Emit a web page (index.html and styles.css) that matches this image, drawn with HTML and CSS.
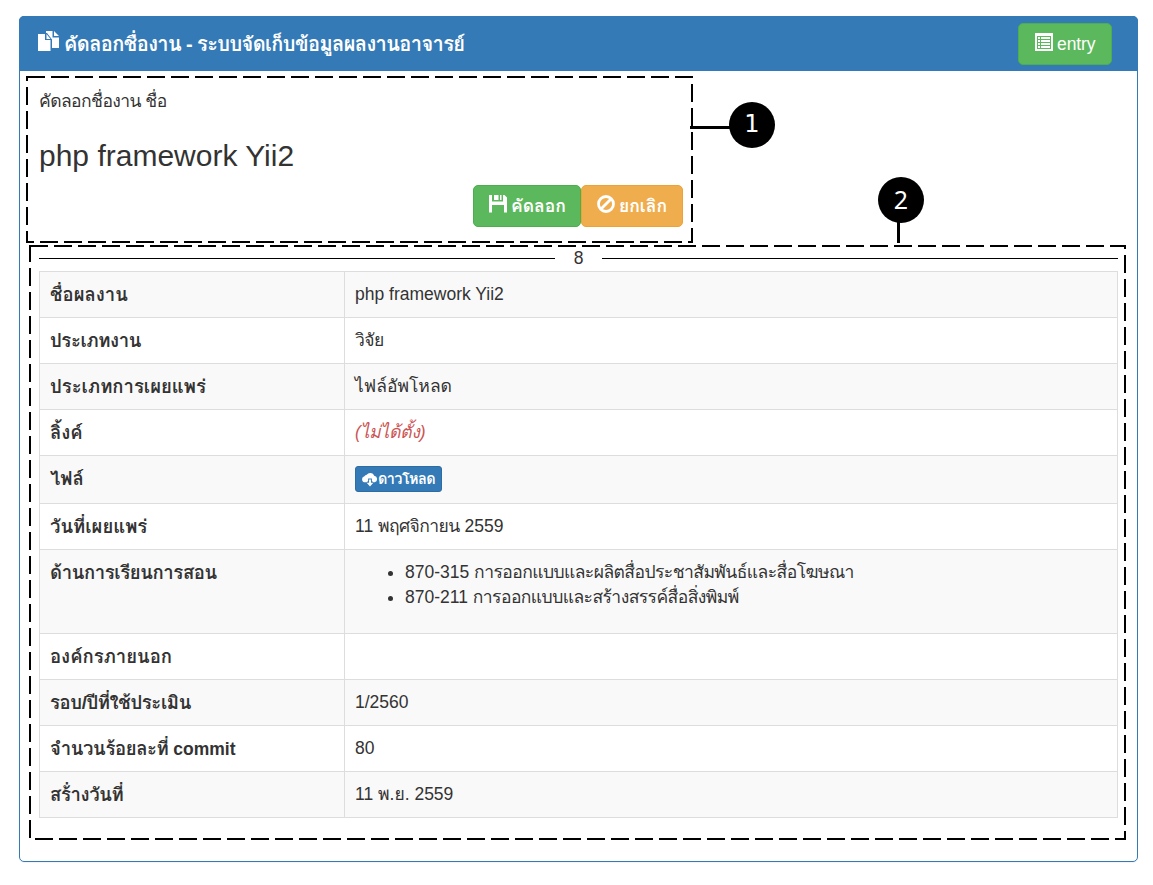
FILE: index.html
```
<!DOCTYPE html>
<html lang="th">
<head>
<meta charset="utf-8">
<title>คัดลอกชื่องาน</title>
<link rel="stylesheet" href="styles.css">
</head>
<body>
<main class="panel">
  <header class="panel-heading">
    <h1 class="panel-title">
      <svg class="icon icon-copy" viewBox="0 0 22 20"><path d="M0 3h7v6h5.500v11H0zM8.500 3l4 5h-4zM8 0h6.500v6.500H21V17h-7V8.500L9 2H8zM16 0l5 5h-5z"/></svg>
      <span class="title-text">คัดลอกชื่องาน - ระบบจัดเก็บข้อมูลผลงานอาจารย์</span>
    </h1>
    <a class="btn btn-success btn-entry"><svg class="icon icon-list" viewBox="0 0 18 18"><path fill-rule="evenodd" d="M0 0h18v18H0zM2 3v13h14V3z"/><path d="M3 4h2v2H3zM6 4h9v2H6zM3 7h2v2H3zM6 7h9v2H6zM3 10h2v2H3zM6 10h9v2H6zM3 13h2v2H3zM6 13h9v2H6z"/></svg><span class="entry-text">entry</span></a>
  </header>
  <div class="panel-body">
    <section class="confirm">
      <p class="tight">คัดลอกชื่องาน ชื่อ</p>
      <h2 class="name">php framework Yii2</h2>
      <div class="actions">
        <button class="btn btn-success btn-copy"><svg class="icon icon-save" viewBox="0 0 18 18"><path d="M0 0h3v6.500h11V0h1.500L18 2.500V17.500h-3V10H3v7.500H0zM5 0h4.500v5H5zM11 0h1.500v5H11z"/></svg><span class="btn-label">คัดลอก</span></button>
        <button class="btn btn-warning"><svg class="icon icon-ban" viewBox="0 0 18 18"><circle cx="9" cy="9" r="7.500"/><path d="M4 14L14 4"/></svg><span class="btn-label">ยกเลิก</span></button>
      </div>
    </section>
    <div class="divider"><span>8</span></div>
    <table class="detail">
      <tr><th class="wide">ชื่อผลงาน</th><td>php framework Yii2</td></tr>
      <tr><th class="slight">ประเภทงาน</th><td><span class="tight">วิจัย</span></td></tr>
      <tr><th class="wide">ประเภทการเผยแพร่</th><td>ไฟล์อัพโหลด</td></tr>
      <tr><th class="wide">ลิ้งค์</th><td><em class="not-set">(ไม่ได้ตั้ง)</em></td></tr>
      <tr class="row-file"><th class="wide">ไฟล์</th><td><a class="btn-xs"><svg class="icon icon-cloud" viewBox="0 0 17 15"><path d="M4 10.500H3.500A3.300 3.300 0 0 1 2.600 4 3.200 3.200 0 0 1 5 2.500 4.500 4.500 0 0 1 13 3.500 3.600 3.600 0 0 1 13.500 10.500H12L10.500 9V6.500h-4V9L5 10.500z"/><path d="M7.500 7.500h2v3.500h2.500l-3.500 4-3.500-4h2.500z"/></svg><span>ดาวโหลด</span></a></td></tr>
      <tr><th class="wide">วันที่เผยแพร่</th><td>11 <span class="tight">พฤศจิกายน</span> 2559</td></tr>
      <tr class="row-list"><th class="slight">ด้านการเรียนการสอน</th><td><ul><li>870-315 <span class="tight">การออกแบบและผลิตสื่อประชาสัมพันธ์และสื่อโฆษณา</span></li><li>870-211 <span class="tight">การออกแบบและสร้างสรรค์สื่อสิ่งพิมพ์</span></li></ul></td></tr>
      <tr><th class="wide">องค์กรภายนอก</th><td></td></tr>
      <tr><th class="slight">รอบ/ปีที่ใช้ประเมิน</th><td>1/2560</td></tr>
      <tr><th><span class="slight">จำนวนร้อยละที่</span> commit</th><td>80</td></tr>
      <tr><th class="slight">สร้่างวันที่</th><td>11 พ.ย. 2559</td></tr>
    </table>
  </div>
</main>
<svg class="callouts" viewBox="0 0 1153 885">
  <rect x="27" y="77" width="665" height="165"/>
  <rect x="30" y="246" width="1095" height="593"/>
  <path class="leader" d="M690 127.500h42M898.500 220v23"/>
</svg>
<span class="badge badge-1">1</span>
<span class="badge badge-2">2</span>
</body>
</html>
```
FILE: styles.css
```
* { box-sizing: border-box; }
body {
  margin: 0;
  padding: 16px 15px 0 19px;
  height: 885px;
  overflow: hidden;
  background: #fff;
  color: #333;
  font: 17.5px/25px "Liberation Sans", Loma, "Noto Sans Thai Looped", "Noto Looped Thai", Waree, Garuda, Umpush, "Tlwg Typo", "Noto Sans Thai", sans-serif;
}
h1, h2, p, ul { margin: 0; }
span, em, th { white-space: nowrap; }
.tight { letter-spacing: -.56px; }
.wide { font-size: 18.5px; letter-spacing: 0; }
.slight { font-size: 18.5px; letter-spacing: -.38px; }
.panel {
  width: 1119px;
  height: 846px;
  border: 1px solid #337ab7;
  border-radius: 5px;
  box-shadow: 0 1px 1px rgba(0, 0, 0, .05);
}
.panel-heading {
  display: flex;
  justify-content: space-between;
  align-items: center;
  height: 55px;
  margin: -1px -1px 0;
  padding: 0 26px 0 19px;
  border-radius: 5px 5px 0 0;
  background: #337ab7;
  color: #fff;
}
.panel-title { display: flex; align-items: center; font-size: 20px; font-weight: 600; }
.title-text { padding-top: 1px; letter-spacing: -.59px; }
.icon { display: block; flex: none; fill: #fff; }
.icon-copy { width: 22px; height: 20px; margin: -5px 4px 0 0; }
.btn {
  display: flex;
  align-items: center;
  height: 42px;
  padding: 0 15px;
  border: 1px solid;
  border-radius: 5px;
  color: #fff;
  font: inherit;
}
.btn-success { background: #5cb85c; border-color: #4cae4c; }
.btn-warning { width: 102px; background: #f0ad4e; border-color: #eea236; }
.btn-entry { width: 94px; padding-left: 16px; }
.entry-text { padding-top: 2px; letter-spacing: -.1px; }
.icon-list, .icon-save, .icon-ban { width: 18px; height: 18px; margin: -4px 4px 0 0; }
.icon-ban { fill: none; stroke: #fff; stroke-width: 2.8; }
.btn-copy { width: 108px; }
.btn-label { font-weight: 700; }
.panel-body { padding: 18px 19px; }
.confirm { width: 644px; height: 163px; }
.name { margin-top: 25px; font-size: 30px; line-height: 33px; font-weight: 400; }
.actions { display: flex; justify-content: flex-end; margin-top: 13px; }
.divider {
  display: grid;
  grid-template-columns: 1fr 47px 1fr;
  align-items: center;
  height: 15px;
  margin-top: -1px;
  text-align: center;
  line-height: 15px;
}
.divider::before, .divider::after { content: ""; height: 1px; background: #000; }
.detail {
  width: 1079px;
  margin-top: 5px;
  border-collapse: collapse;
  table-layout: fixed;
}
.detail tr { height: 46px; }
.detail tr:nth-child(odd) { background: #f9f9f9; }
.detail .row-file { height: 48px; }
.detail .row-list { height: 84px; }
th, td {
  padding: 10px 10px 0;
  border: 1px solid #ddd;
  text-align: left;
  vertical-align: top;
  line-height: 25px;
}
th { width: 305px; }
ul { padding-left: 50px; }
.not-set { color: #c55; letter-spacing: -.2px; }
.btn-xs {
  display: flex;
  align-items: center;
  width: 87px;
  height: 26px;
  padding: 0 6px;
  border: 1px solid #2e6da4;
  border-radius: 3px;
  background: #337ab7;
  color: #fff;
  font-size: 14.5px;
  font-weight: 600;
  letter-spacing: -.6px;
}
.icon-cloud { width: 16px; height: 15px; }
.callouts { position: absolute; inset: 0; width: 1153px; height: 885px; fill: none; stroke: #000; stroke-width: 2; }
.callouts rect { stroke-dasharray: 18 6; }
.callouts .leader { stroke-width: 3; }
.badge {
  position: absolute;
  width: 46px;
  height: 46px;
  border-radius: 50%;
  background: #000;
  color: #fff;
  font: 24px/45px "DejaVu Sans", sans-serif;
  text-align: center;
}
.badge-1 { left: 729px; top: 102px; }
.badge-2 { left: 878px; top: 177px; font: 25px/44px "Noto Sans", sans-serif; }
```
